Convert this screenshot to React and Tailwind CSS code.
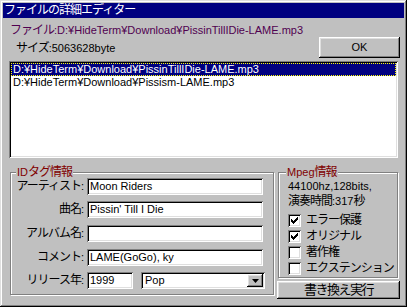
import React from "react";

// win95 style bevels
const raisedWin =
  "shadow-[inset_-1px_-1px_0_#000,inset_1px_1px_0_#dfdfdf,inset_-2px_-2px_0_#808080,inset_2px_2px_0_#fff]";
const raisedBtn =
  "shadow-[inset_-1px_-1px_0_#000,inset_1px_1px_0_#fff,inset_-2px_-2px_0_#808080,inset_2px_2px_0_#dfdfdf]";
const sunken =
  "shadow-[inset_1px_1px_0_#808080,inset_-1px_-1px_0_#fff,inset_2px_2px_0_#000,inset_-2px_-2px_0_#dfdfdf]";
const etched = "border border-[#808080] shadow-[1px_1px_0_#fff,inset_1px_1px_0_#fff]";

// japanese text a bit larger, tighter
const J = ({ children }) => <span className="text-[12px] tracking-[-1px]">{children}</span>;

const Field = ({ label, value, className = "" }) => (
  <div className={`flex items-center h-[17px] ${className}`}>
    <div className="w-[73px] text-right leading-[17px] whitespace-nowrap">
      <J>{label}</J>:
    </div>
    <div className={`ml-[3px] w-[176px] h-[17px] bg-white ${sunken} pl-[3px] leading-[17px]`}>{value}</div>
  </div>
);

const Check = ({ label, checked }) => (
  <div className="flex items-center h-[16px]">
    <div className={`w-[13px] h-[13px] bg-white ${sunken} relative`}>
      {checked && (
        <svg className="absolute left-[3px] top-[3px]" width="7" height="7" viewBox="0 0 7 7">
          <path d="M0 2h1v1h1v1h1V3h1V2h1V1h1V0h1v3H6v1H5v1H4v1H3v1H2V6H1V5H0z" fill="#000" />
        </svg>
      )}
    </div>
    <span className="ml-[5px] leading-[16px] whitespace-nowrap">
      <J>{label}</J>
    </span>
  </div>
);

export default function App() {
  return (
    <div
      className={`w-[407px] h-[307px] bg-[#c0c0c0] p-[3px] flex flex-col text-[11px] text-black font-['Liberation_Sans','Noto_Sans_CJK_JP',sans-serif] ${raisedWin}`}
    >
      {/* title bar */}
      <div className="h-[15px] bg-[#000080] text-white pl-[1px] leading-[15px] whitespace-nowrap">
        <J>ファイルの詳細エディター</J>
      </div>

      {/* file info */}
      <div className="mt-[5px] h-[14px] pl-[7px] leading-[14px] text-[#500050] whitespace-nowrap">
        <J>ファイル</J>:D:¥HideTerm¥Download¥PissinTillIDie-LAME.mp3
      </div>
      <div className="flex items-center h-[21px]">
        <div className="pl-[13px] whitespace-nowrap">
          <J>サイズ</J>:5063628byte
        </div>
        <button className={`ml-auto mr-[4px] w-[81px] h-[21px] bg-[#c0c0c0] ${raisedBtn} flex items-center justify-center`}>
          OK
        </button>
      </div>

      {/* file list */}
      <div className={`mt-[3px] ml-[6px] w-[389px] h-[97px] bg-white ${sunken} p-[2px]`}>
        <div className="h-[13px] bg-[#000080] text-white pl-[2px] leading-[13px] outline outline-1 outline-dotted outline-[#ffff00] -outline-offset-1 whitespace-nowrap">
          D:¥HideTerm¥Download¥PissinTillIDie-LAME.mp3
        </div>
        <div className="h-[13px] pl-[2px] leading-[13px] whitespace-nowrap">
          D:¥HideTerm¥Download¥Pissism-LAME.mp3
        </div>
      </div>

      {/* bottom area */}
      <div className="mt-[7px] flex">
        {/* ID tag group */}
        <div className="ml-[7px] w-[264px] relative pt-[7px]">
          <span className="absolute top-0 left-[6px] px-[1px] bg-[#c0c0c0] text-[#800000] leading-[14px]">
            ID<J>タグ情報</J>
          </span>
          <div className={`h-[123px] ${etched} pt-[5px] flex flex-col`}>
            <Field label="アーティスト" value="Moon Riders" />
            <Field label="曲名" value="Pissin' Till I Die" className="mt-[6px]" />
            <Field label="アルバム名" value="" className="mt-[7px]" />
            <Field label="コメント" value="LAME(GoGo), ky" className="mt-[7px]" />
            <div className="mt-[6px] flex items-center h-[17px]">
              <div className="w-[73px] text-right leading-[17px] whitespace-nowrap">
                <J>リリース年</J>:
              </div>
              <div className={`ml-[3px] w-[46px] h-[17px] bg-white ${sunken} pl-[3px] leading-[17px]`}>1999</div>
              <div className={`ml-[8px] w-[124px] h-[17px] bg-white ${sunken} flex items-center`}>
                <span className="pl-[4px] leading-[17px]">Pop</span>
                <div className={`ml-auto mr-[2px] w-[16px] h-[13px] bg-[#c0c0c0] ${raisedBtn} flex items-center justify-center`}>
                  <svg width="7" height="4" viewBox="0 0 7 4">
                    <path d="M0 0h7L3.5 4z" fill="#000" />
                  </svg>
                </div>
              </div>
            </div>
          </div>
        </div>

        {/* mpeg info + button */}
        <div className="ml-[3px] w-[123px] flex flex-col">
          <div className="ml-[1px] w-[120px] relative pt-[7px]">
            <span className="absolute top-0 left-[8px] px-[1px] bg-[#c0c0c0] text-[#800000] leading-[14px]">
              Mpeg<J>情報</J>
            </span>
            <div className={`h-[106px] ${etched} pt-[6px] pl-[9px]`}>
              <div className="leading-[15px] whitespace-nowrap">44100hz,128bits,</div>
              <div className="leading-[15px] whitespace-nowrap">
                <J>演奏時間</J>:317<J>秒</J>
              </div>
              <div className="mt-[3px]">
                <Check label="エラー保護" checked />
                <Check label="オリジナル" checked />
                <Check label="著作権" />
                <Check label="エクステンション" />
              </div>
            </div>
          </div>
          <button className={`mt-[3px] w-[123px] h-[18px] bg-[#c0c0c0] ${raisedBtn} flex items-center justify-center text-[13px] tracking-[-1.5px] leading-[18px]`}>
            書き換え実行
          </button>
        </div>
      </div>
    </div>
  );
}
